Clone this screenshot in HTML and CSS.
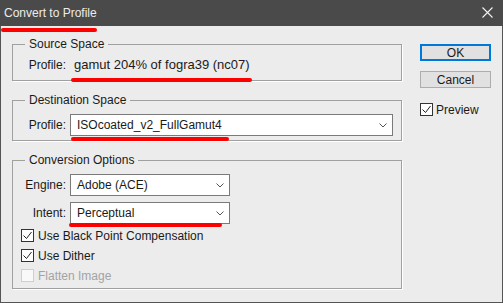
FILE: index.html
```html
<!DOCTYPE html>
<html lang="en">
<head>
  <meta charset="UTF-8" />
  <title>Convert to Profile</title>
  <link rel="stylesheet" href="styles.css">
</head>
<body>

  <div class="window">
    <div class="titlebar">
      <span class="title">Convert to Profile</span>
      <svg class="close" width="11" height="11" viewBox="0 0 11 11">
        <path d="M0.5 0.5 L10.5 10.5 M10.5 0.5 L0.5 10.5" stroke="#f2f2f2" stroke-width="1.1" fill="none" />
      </svg>
    </div>

    <div class="client">
      <div class="groups">
        <fieldset class="group group-source">
          <legend>Source Space</legend>
          <div class="row">
            <span class="label">Profile:</span>
            <span class="value">gamut 204% of fogra39 (nc07)</span>
          </div>
        </fieldset>

        <fieldset class="group group-dest">
          <legend>Destination Space</legend>
          <div class="row">
            <span class="label">Profile:</span>
            <div class="select select-wide">
              <span>ISOcoated_v2_FullGamut4</span>
              <svg class="chevron" width="8" height="5" viewBox="0 0 8 5"><path d="M0.5 0.5 L4 4 L7.5 0.5" stroke="#555" fill="none" /></svg>
            </div>
          </div>
        </fieldset>

        <fieldset class="group group-options">
          <legend>Conversion Options</legend>
          <div class="row">
            <span class="label">Engine:</span>
            <div class="select select-short">
              <span>Adobe (ACE)</span>
              <svg class="chevron" width="8" height="5" viewBox="0 0 8 5"><path d="M0.5 0.5 L4 4 L7.5 0.5" stroke="#555" fill="none" /></svg>
            </div>
          </div>
          <div class="row row-next">
            <span class="label">Intent:</span>
            <div class="select select-short">
              <span>Perceptual</span>
              <svg class="chevron" width="8" height="5" viewBox="0 0 8 5"><path d="M0.5 0.5 L4 4 L7.5 0.5" stroke="#555" fill="none" /></svg>
            </div>
          </div>
          <div class="checks">
            <div class="check">
              <span class="box"><svg width="11" height="11" viewBox="0 0 11 11"><path d="M1.5 5.5 L4.5 8.5 L9.5 2" stroke="#222" stroke-width="1" fill="none" /></svg></span>
              <span>Use Black Point Compensation</span>
            </div>
            <div class="check">
              <span class="box"><svg width="11" height="11" viewBox="0 0 11 11"><path d="M1.5 5.5 L4.5 8.5 L9.5 2" stroke="#222" stroke-width="1" fill="none" /></svg></span>
              <span>Use Dither</span>
            </div>
            <div class="check disabled">
              <span class="box"></span>
              <span>Flatten Image</span>
            </div>
          </div>
        </fieldset>
      </div>

      <div class="side">
        <button class="btn btn-default">OK</button>
        <button class="btn">Cancel</button>
        <div class="check check-preview">
          <span class="box"><svg width="11" height="11" viewBox="0 0 11 11"><path d="M1.5 5.5 L4.5 8.5 L9.5 2" stroke="#222" stroke-width="1" fill="none" /></svg></span>
          <span>Preview</span>
        </div>
      </div>
    </div>

    <!-- red hand-drawn marks over the screenshot -->
    <div class="mark mark-title"></div>
    <div class="mark mark-source"></div>
    <div class="mark mark-dest"></div>
    <div class="mark mark-intent"></div>
  </div>

</body>
</html>
```

FILE: styles.css
```css
body {
  margin: 0;
  background: #ececec;
  font-family: 'Liberation Sans', Arial, sans-serif;
  font-size: 12px;
  color: #1a1a1a;
}

.window {
  position: relative;
  width: 503px;
  height: 303px;
  overflow: hidden;
}

.titlebar {
  height: 26px;
  background: #4a4a4a;
  display: flex;
  align-items: center;
  justify-content: space-between;
  padding: 0 10px 0 4px;
}
.title {
  color: #ececec;
  font-size: 12px;
  line-height: 26px;
}
.close {
  margin-top: -1px;
}

.client {
  box-sizing: border-box;
  height: 277px;
  display: flex;
  padding: 11px 11px 0 11px;
  border: 1px solid #555;
  border-top: none;
}

.groups {
  width: 390px;
  display: flex;
  flex-direction: column;
  gap: 12px;
}

.group {
  box-sizing: border-box;
  margin: 0;
  padding: 0 8px;
  min-width: 0;
  border: 1px solid #a0a0a0;
  box-shadow: 1px 1px 0 #fff;
}
.group legend {
  margin-left: 4px;
  padding: 0 4px;
  line-height: 14px;
}
.group-source { height: 44px; }
.group-dest { height: 48px; }
.group-options { height: 136px; }

.row {
  display: flex;
  align-items: center;
  margin-top: 7px;
  line-height: 14px;
}
.row-next {
  margin-top: 6px;
}
.label {
  width: 45px;
  text-align: right;
  margin-right: 4px;
  flex: none;
}
.value {
  margin-left: 4px;
  font-size: 13px;
}

.select {
  box-sizing: border-box;
  height: 22px;
  background: #fff;
  border: 1px solid #7a7a7a;
  display: flex;
  align-items: center;
  justify-content: space-between;
  padding: 0 5px 0 6px;
}
.select-wide { width: 324px; }
.select-short { width: 160px; }

.checks {
  margin-top: 5px;
  display: flex;
  flex-direction: column;
  gap: 7px;
}
.check {
  display: flex;
  align-items: center;
  gap: 4px;
  height: 13px;
  line-height: 14px;
}
.check .box {
  box-sizing: border-box;
  width: 13px;
  height: 13px;
  border: 1px solid #333;
  background: #fff;
  display: flex;
  flex: none;
}
.check.disabled {
  color: #a3a3a3;
}
.check.disabled .box {
  border-color: #cfcfcf;
  background: #f9f9f9;
}

.side {
  margin-left: 18px;
  width: 71px;
  padding-top: 7px;
  display: flex;
  flex-direction: column;
}
.btn {
  box-sizing: border-box;
  width: 71px;
  height: 17px;
  margin: 0 0 10px 0;
  padding: 0;
  font-family: inherit;
  font-size: 12px;
  color: #1a1a1a;
  background: #e1e1e1;
  border: 1px solid #adadad;
  line-height: 14px;
}
.btn-default {
  border: 2px solid #0078d7;
}
.check-preview {
  margin-top: 5px;
  gap: 3px;
}

.mark {
  position: absolute;
  height: 4px;
  background: #ff0000;
  border-radius: 2px;
  filter: blur(0.6px);
}
.mark-title { left: 1px; top: 28px; width: 96px; }
.mark-source { left: 71px; top: 78px; width: 181px; }
.mark-dest { left: 71px; top: 137px; width: 158px; }
.mark-intent { left: 69px; top: 223px; width: 153px; }
```
